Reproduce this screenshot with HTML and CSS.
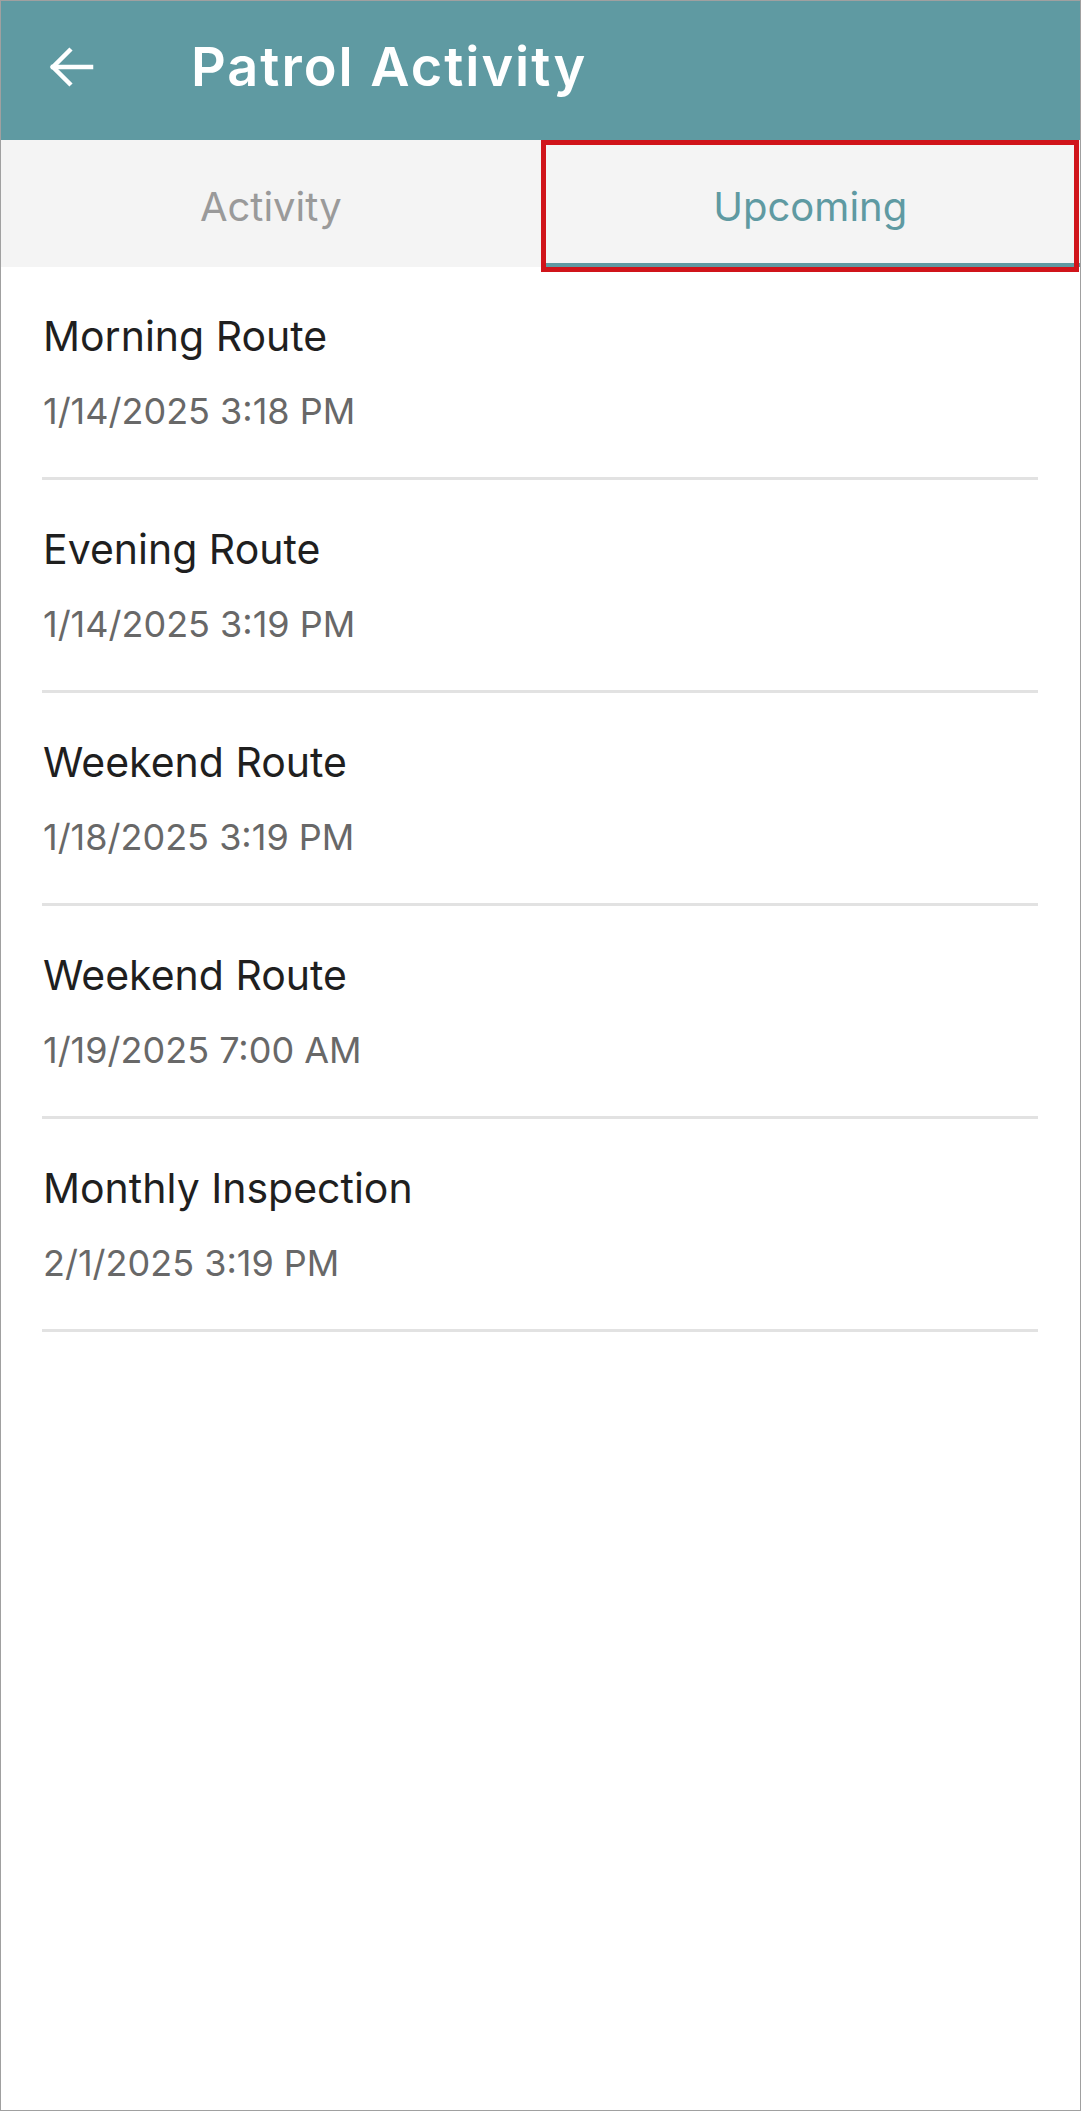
FILE: index.html
```html
<!DOCTYPE html>
<html lang="en">
<head>
    <meta charset="UTF-8">
    <meta name="viewport" content="width=device-width, initial-scale=1.0">
    <title>Patrol Activity</title>
    <link rel="stylesheet" href="styles.css">
</head>
<body>
    <div class="screen">
        <!-- Top app bar -->
        <header class="app-bar">
            <button class="back-btn" aria-label="Back">
                <svg width="48" height="48" viewBox="0 0 48 48" fill="none" stroke="#fff" stroke-width="4.5" stroke-linecap="square">
                    <line x1="6" y1="24" x2="44" y2="24"/>
                    <polyline points="24,6 6,24 24,42" stroke-linecap="butt"/>
                </svg>
            </button>
            <h1 class="app-title">Patrol Activity</h1>
        </header>

        <!-- Tabs -->
        <nav class="tabs">
            <div class="tab">Activity</div>
            <div class="tab active">Upcoming</div>
        </nav>

        <!-- Upcoming patrols -->
        <ul class="patrol-list">
            <li class="patrol-item">
                <div class="patrol-name">Morning Route</div>
                <div class="patrol-date">1/14/2025 3:18 PM</div>
            </li>
            <li class="patrol-item">
                <div class="patrol-name">Evening Route</div>
                <div class="patrol-date">1/14/2025 3:19 PM</div>
            </li>
            <li class="patrol-item">
                <div class="patrol-name">Weekend Route</div>
                <div class="patrol-date">1/18/2025 3:19 PM</div>
            </li>
            <li class="patrol-item">
                <div class="patrol-name">Weekend Route</div>
                <div class="patrol-date">1/19/2025 7:00 AM</div>
            </li>
            <li class="patrol-item">
                <div class="patrol-name">Monthly Inspection</div>
                <div class="patrol-date">2/1/2025 3:19 PM</div>
            </li>
        </ul>
    </div>
</body>
</html>
```

FILE: styles.css
```css
body {
    margin: 0;
    font-family: Inter, "Noto Sans", Arial, sans-serif;
    background-color: #fff;
}
.screen {
    width: 1081px;
    height: 2111px;
    box-sizing: border-box;
    border: 1px solid #a0a0a0;
    background-color: #fff;
    overflow: hidden;
}
.app-bar {
    display: flex;
    align-items: center;
    height: 139px;
    box-sizing: border-box;
    padding: 0 0 8px 46px;
    background-color: #5f9aa2;
}
.back-btn {
    display: flex;
    padding: 0;
    border: none;
    background: none;
    margin-right: 96px;
}
.app-title {
    margin: 0;
    color: #fff;
    font-size: 54px;
    font-weight: 600;
    letter-spacing: 2px;
    line-height: 66px;
}
.tabs {
    display: flex;
    height: 127px;
    background-color: #f4f4f4;
}
.tab {
    flex: 1;
    display: flex;
    align-items: center;
    justify-content: center;
    padding-top: 6px;
    box-sizing: border-box;
    font-size: 40px;
    font-weight: 400;
    color: #9a9a9a;
    position: relative;
}
.tab.active {
    color: #5f9aa2;
    border-bottom: 4px solid #5f9aa2;
    padding-top: 10px;
}
/* highlight frame around the selected tab */
.tab.active::after {
    content: "";
    position: absolute;
    top: 0;
    left: 0;
    right: 1px;
    bottom: -9px;
    border: 5px solid #d0141a;
}
.patrol-list {
    list-style: none;
    margin: 0;
    padding: 0 42px 0 41px;
}
.patrol-item {
    padding: 44px 0 44px 1px;
    border-bottom: 3px solid #e2e2e2;
}
.patrol-name {
    font-size: 41px;
    line-height: 50px;
    color: #1f1f1f;
}
.patrol-date {
    margin-top: 28px;
    font-size: 36px;
    line-height: 44px;
    color: #686868;
}
```
